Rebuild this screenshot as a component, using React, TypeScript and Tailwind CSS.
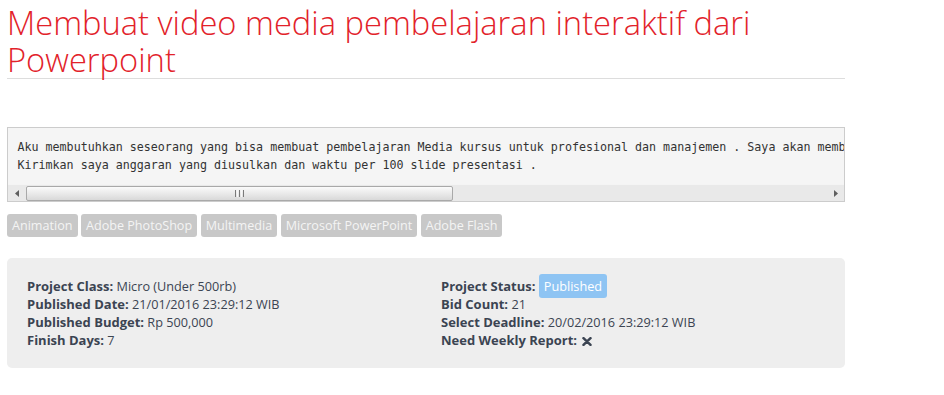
import React from "react";

const tags = ["Animation", "Adobe PhotoShop", "Multimedia", "Microsoft PowerPoint", "Adobe Flash"];

function ScrollBar() {
  return (
    <div className="flex h-[17px] items-stretch bg-[#e9e9e9] border-t border-[#f4f4f4]">
      <div className="w-[17px] flex items-center justify-center">
        <svg width="4" height="7" viewBox="0 0 4 7">
          <path d="M4 0 L0 3.5 L4 7 Z" fill="#5f5f5f" />
        </svg>
      </div>
      <div className="flex-1 flex items-center">
        <div className="ml-[1px] w-[427px] h-[15px] rounded-[2px] border border-[#a9a9a9] bg-gradient-to-b from-[#fbfbfb] to-[#d9d9d9] flex items-center justify-center gap-[1px]">
          <span className="w-[1px] h-[7px] bg-[#7a7a7a]" />
          <span className="w-[1px] h-[7px] bg-[#f8f8f8]" />
          <span className="w-[1px] h-[7px] bg-[#7a7a7a]" />
          <span className="w-[1px] h-[7px] bg-[#f8f8f8]" />
          <span className="w-[1px] h-[7px] bg-[#7a7a7a]" />
        </div>
      </div>
      <div className="w-[17px] flex items-center justify-center">
        <svg width="4" height="7" viewBox="0 0 4 7">
          <path d="M0 0 L4 3.5 L0 7 Z" fill="#5f5f5f" />
        </svg>
      </div>
    </div>
  );
}

function Row({ label, children }: { label: string; children: React.ReactNode }) {
  return (
    <div>
      <b className="font-bold text-[13px]">{label}</b> {children}
    </div>
  );
}

export default function App() {
  return (
    <div className="bg-white min-h-[395px] font-['Open_Sans',sans-serif]">
      <div className="ml-[7px] w-[838px] pt-[4px]">
        <h1 className="text-[32.7px] leading-[37px] font-light text-[#e2222a] border-b border-[#dddddd]">
          Membuat video media pembelajaran interaktif dari Powerpoint
        </h1>

        <div className="mt-[48px] border border-[#cccccc] bg-[#f5f5f5]">
          <div className="overflow-hidden whitespace-pre px-[9.5px] pt-[9.5px] pb-[9.5px] font-['DejaVu_Sans_Mono',monospace] text-[11.66px] leading-[18.57px] text-[#333333]">
            {"Aku membutuhkan seseorang yang bisa membuat pembelajaran Media kursus untuk profesional dan manajemen . Saya akan membayar sesuai dengan kualitas pekerjaan .\nKirimkan saya anggaran yang diusulkan dan waktu per 100 slide presentasi ."}
          </div>
          <ScrollBar />
        </div>

        <div className="mt-[12px] flex gap-[3.5px]">
          {tags.map((t) => (
            <span
              key={t}
              className="h-[23px] px-[5px] rounded-[3px] bg-[#c8c8c8] text-[#f4f4f4] text-[12.6px] leading-[23px]"
            >
              {t}
            </span>
          ))}
        </div>

        <div className="mt-[21px] rounded-[5px] bg-[#eeeeee] px-[5px] py-[19px] text-[12.7px] leading-[18px] text-[#3b4452]">
          <div className="grid grid-cols-2">
            <div className="px-[15px]">
              <Row label="Project Class:">Micro (Under 500rb)</Row>
              <Row label="Published Date:">21/01/2016 23:29:12 WIB</Row>
              <Row label="Published Budget:">Rp 500,000</Row>
              <Row label="Finish Days:">7</Row>
            </div>
            <div className="px-[15px]">
              <Row label="Project Status:">
                <span className="bg-[#8ec4f3] text-white rounded-[3px] px-[5px] py-[3px]">Published</span>
              </Row>
              <Row label="Bid Count:">21</Row>
              <Row label="Select Deadline:">20/02/2016 23:29:12 WIB</Row>
              <Row label="Need Weekly Report:">
                <svg width="10" height="9" viewBox="0 0 10 9" className="inline-block align-[-1px] ml-[2px]">
                  <path d="M1.5 1.2 L8.5 7.8 M8.5 1.2 L1.5 7.8" stroke="#3b4452" strokeWidth="2.5" strokeLinecap="round" />
                </svg>
              </Row>
            </div>
          </div>
        </div>
      </div>
    </div>
  );
}
